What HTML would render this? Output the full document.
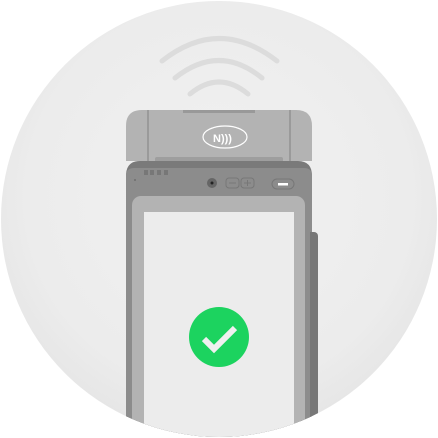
<!DOCTYPE html><html><head><style>
html,body{margin:0;padding:0;background:#fff;width:438px;height:438px;overflow:hidden}
</style></head><body>
<svg width="438" height="438" viewBox="0 0 438 438" xmlns="http://www.w3.org/2000/svg">
<defs>
<clipPath id="c"><circle cx="219" cy="219" r="218"/></clipPath>
<radialGradient id="bg" cx="50%" cy="45%" r="55%"><stop offset="0" stop-color="#f1f1f1"/><stop offset="0.8" stop-color="#ececec"/><stop offset="1" stop-color="#e6e6e6"/></radialGradient>
</defs>
<circle cx="219" cy="219" r="218" fill="url(#bg)"/>
<g fill="none" stroke="#dcdcdc" stroke-width="5" stroke-linecap="round">
<path d="M162 61 Q219 16 277 61"/>
<path d="M175 78 Q219 43 262 78"/>
<path d="M190 94 Q219 70 248 94"/>
</g>
<g clip-path="url(#c)">
<path d="M126 161 V126 Q126 110 142 110 H296 Q312 110 312 126 V161 Z" fill="#b3b3b3"/>
<rect x="147" y="110" width="2" height="51" fill="#9a9a9a"/>
<rect x="289" y="110" width="2" height="51" fill="#9a9a9a"/>
<rect x="183" y="110" width="72" height="3" fill="#999"/>
<rect x="155" y="157" width="128" height="6" rx="2" fill="#9e9e9e"/>
<ellipse cx="225" cy="137" rx="22" ry="11" fill="none" stroke="#fff" stroke-width="1.2"/>
<text x="213" y="142" font-family="Liberation Sans, sans-serif" font-weight="bold" font-size="11" fill="#fff">N)))</text>
<path d="M126 176 Q126 161 140 161 H298 Q312 161 312 176 V440 H126 Z" fill="#7a7a7a"/>
<path d="M126 176 Q126 168 134 168 H304 Q312 168 312 176 V440 H126 Z" fill="#8c8c8c"/>
<g fill="#777"><rect x="144" y="170" width="4" height="5"/><rect x="150" y="170" width="4" height="5"/><rect x="157" y="170" width="4" height="5"/><rect x="164" y="170" width="4" height="5"/></g>
<circle cx="135" cy="180" r="1" fill="#6e6e6e"/>
<circle cx="212" cy="183" r="5" fill="#666"/><circle cx="212" cy="183" r="1.5" fill="#222"/>
<rect x="226" y="178" width="13" height="10" rx="3" fill="none" stroke="#777" stroke-width="1"/>
<rect x="241" y="178" width="13" height="10" rx="3" fill="none" stroke="#777" stroke-width="1"/>
<path d="M229 183 H236 M244 183 H251 M247.5 180 V186" stroke="#777" stroke-width="1"/>
<rect x="272" y="179" width="22" height="10" rx="5" fill="#8c8c8c" stroke="#777" stroke-width="1"/>
<rect x="278" y="183" width="10" height="2.5" fill="#fff"/>
<rect x="300" y="232" width="18" height="210" rx="4" fill="#777"/>
<rect x="300" y="232" width="10" height="210" fill="#8c8c8c"/>
<rect x="132" y="196" width="173" height="250" rx="9" fill="#b3b3b3"/>
<rect x="144" y="212" width="150" height="240" fill="#ececec"/>
<circle cx="219" cy="337" r="30" fill="#1cd35f"/>
<path d="M204 339 L214 349 L235 328" fill="none" stroke="#f0f0f0" stroke-width="6"/>
</g>
</svg>
</body></html>
